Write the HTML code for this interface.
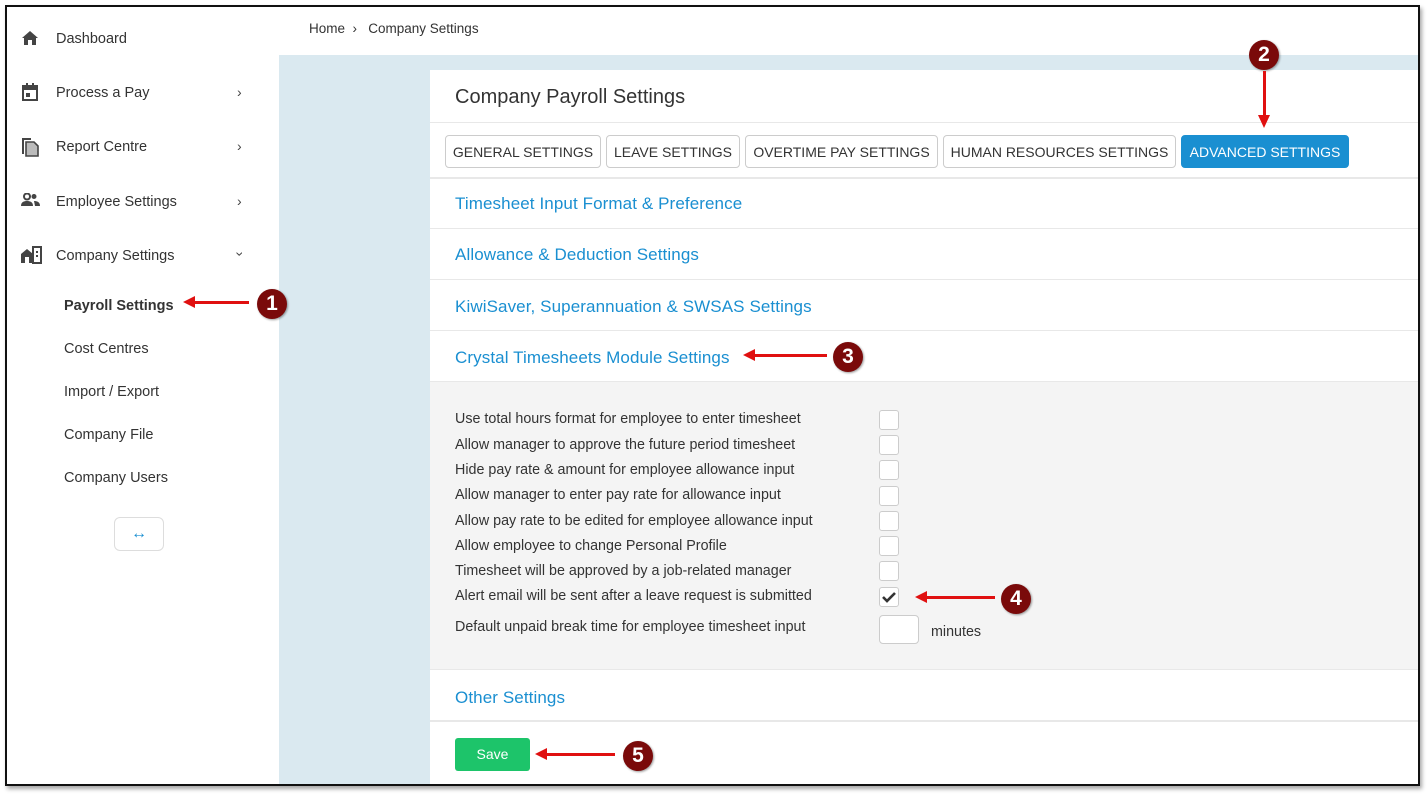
<!DOCTYPE html>
<html><head><style>
*{margin:0;padding:0;box-sizing:border-box}
body{width:1427px;height:795px;background:#fff;font-family:"Liberation Sans",sans-serif;color:#333;position:relative;overflow:hidden}
.frame{position:absolute;left:5px;top:5px;width:1415px;height:781px;border:2px solid #111;box-shadow:2px 3px 4px rgba(0,0,0,.35);overflow:hidden;background:#dae9f0}
.side{position:absolute;left:0;top:0;width:272px;height:100%;background:#fff}
.a{position:absolute;font-size:14.5px;color:#333;white-space:nowrap}
.hdr{position:absolute;left:272px;top:0;right:0;height:48px;background:#fff}
.card{position:absolute;left:423px;top:63px;right:0;bottom:0;background:#fff}
.hr{position:absolute;left:0;right:0;height:2px;background:#e8e8e8}
.tab{position:absolute;top:128px;height:33px;border:1px solid #ccc;border-radius:4px;font-size:14px;line-height:33px;text-align:center;color:#333;background:#fff}
.sec{position:absolute;left:448px;font-size:17px;color:#1a8fd1;letter-spacing:.1px}
.lbl{position:absolute;left:448px;font-size:14.3px;color:#333}
.cb{position:absolute;left:872px;width:20px;height:20px;border:1px solid #ccc;border-radius:3px;background:#fff}
.num{position:absolute;width:30px;height:30px;border-radius:50%;background:#7a0a0a;color:#fff;font-weight:bold;font-size:21px;line-height:30px;text-align:center;box-shadow:1px 1px 2px rgba(0,0,0,.4)}
.ar{position:absolute;height:3px;background:#e01010}
.ar:before{content:"";position:absolute;left:-10px;top:-5px;border-right:12px solid #e01010;border-top:6.5px solid transparent;border-bottom:6.5px solid transparent}
.chev{position:absolute;left:230px;font-size:14px;color:#444}
</style></head><body>
<div class="frame">
<div class="side">
<svg style="position:absolute;left:14px;top:23px" width="18" height="16" viewBox="0 0 18 16"><path d="M9 1L1 8h2v7h4v-5h4v5h4V8h2z" fill="#444"/></svg>
<div class="a" style="left:49px;top:24px">Dashboard</div>
<svg style="position:absolute;left:15px;top:76px" width="16" height="18" viewBox="0 0 16 18"><rect x="1" y="3" width="14" height="14" fill="none" stroke="#444" stroke-width="2"/><rect x="1" y="3" width="14" height="4" fill="#444"/><rect x="4" y="0" width="2" height="4" fill="#444"/><rect x="10" y="0" width="2" height="4" fill="#444"/><rect x="4" y="10" width="4" height="4" fill="#444"/></svg>
<div class="a" style="left:49px;top:78px">Process a Pay</div><div class="chev" style="top:77px">›</div>
<svg style="position:absolute;left:14px;top:130px" width="18" height="20" viewBox="0 0 18 20"><path d="M1 1h9v2H3v14H1z" fill="#444"/><path d="M5 5h8l4 4v10H5z" fill="#bbb" stroke="#444" stroke-width="1.6"/></svg>
<div class="a" style="left:49px;top:132px">Report Centre</div><div class="chev" style="top:131px">›</div>
<svg style="position:absolute;left:14px;top:186px" width="20" height="14" viewBox="0 0 20 14"><circle cx="6" cy="3.5" r="3" fill="none" stroke="#444" stroke-width="2"/><path d="M0 13c0-4 3-5 6-5s6 1 6 5z" fill="#444"/><circle cx="13" cy="3.5" r="2.5" fill="#444"/><path d="M13 8c3 0 6 1 6 5h-5z" fill="#444"/></svg>
<div class="a" style="left:49px;top:187px">Employee Settings</div><div class="chev" style="top:186px">›</div>
<svg style="position:absolute;left:13px;top:239px" width="22" height="18" viewBox="0 0 22 18"><path d="M1 17V8l6-5 6 5v9z" fill="#444"/><rect x="5" y="11" width="4" height="6" fill="#fff"/><rect x="13" y="1" width="8" height="16" fill="none" stroke="#444" stroke-width="2"/><rect x="16" y="5" width="2" height="2" fill="#444"/><rect x="16" y="9" width="2" height="2" fill="#444"/></svg>
<div class="a" style="left:49px;top:241px">Company Settings</div><div class="chev" style="top:239px;transform:rotate(90deg);left:231px">›</div>
<div class="a" style="left:57px;top:291px;font-weight:bold">Payroll Settings</div>
<div class="a" style="left:57px;top:334px">Cost Centres</div>
<div class="a" style="left:57px;top:377px">Import / Export</div>
<div class="a" style="left:57px;top:420px">Company File</div>
<div class="a" style="left:57px;top:463px">Company Users</div>
<div style="position:absolute;left:107px;top:510px;width:50px;height:34px;border:1px solid #ddd;border-radius:6px;color:#1a8fd1;text-align:center;line-height:31px;font-size:16px;font-weight:bold">↔</div>
</div>
<div class="hdr"><div class="a" style="left:30px;top:14px;font-size:13.5px">Home &nbsp;›&nbsp;&nbsp; Company Settings</div></div>
<div class="card">
<div class="a" style="left:25px;top:16px;font-size:20px;color:#333">Company Payroll Settings</div>
<div class="hr" style="top:52px;height:1px"></div>
<div class="hr" style="top:107px"></div>
<div class="hr" style="top:158px;height:1px"></div>
<div class="hr" style="top:209px;height:1px"></div>
<div class="hr" style="top:260px;height:1px"></div>
<div style="position:absolute;left:0;right:0;top:311px;height:289px;background:#f4f4f4;border-top:1px solid #e8e8e8;border-bottom:1px solid #e8e8e8"></div>
<div class="hr" style="top:650px"></div>
</div>
<div class="tab" style="left:438px;width:156px">GENERAL SETTINGS</div>
<div class="tab" style="left:599px;width:134px">LEAVE SETTINGS</div>
<div class="tab" style="left:738px;width:193px">OVERTIME PAY SETTINGS</div>
<div class="tab" style="left:936px;width:233px">HUMAN RESOURCES SETTINGS</div>
<div class="tab" style="left:1174px;width:168px;background:#1a8fd1;border-color:#1a8fd1;color:#fff">ADVANCED SETTINGS</div>
<div class="sec" style="top:187px">Timesheet Input Format &amp; Preference</div>
<div class="sec" style="top:238px">Allowance &amp; Deduction Settings</div>
<div class="sec" style="top:290px">KiwiSaver, Superannuation &amp; SWSAS Settings</div>
<div class="sec" style="top:341px">Crystal Timesheets Module Settings</div>
<div class="lbl" style="top:404px">Use total hours format for employee to enter timesheet</div>
<div class="lbl" style="top:430px">Allow manager to approve the future period timesheet</div>
<div class="lbl" style="top:455px">Hide pay rate &amp; amount for employee allowance input</div>
<div class="lbl" style="top:480px">Allow manager to enter pay rate for allowance input</div>
<div class="lbl" style="top:506px">Allow pay rate to be edited for employee allowance input</div>
<div class="lbl" style="top:531px">Allow employee to change Personal Profile</div>
<div class="lbl" style="top:556px">Timesheet will be approved by a job-related manager</div>
<div class="lbl" style="top:581px">Alert email will be sent after a leave request is submitted</div>
<div class="lbl" style="top:612px">Default unpaid break time for employee timesheet input</div>
<div class="cb" style="top:403px"></div><div class="cb" style="top:428px"></div><div class="cb" style="top:453px"></div><div class="cb" style="top:479px"></div><div class="cb" style="top:504px"></div><div class="cb" style="top:529px"></div><div class="cb" style="top:554px"></div>
<div class="cb" style="top:580px"><svg width="18" height="18" viewBox="0 0 18 18"><path d="M3 9l4 4 8-8" fill="none" stroke="#333" stroke-width="2.6"/></svg></div>
<div class="cb" style="top:608px;width:40px;height:29px;border-radius:4px"></div>
<div class="lbl" style="left:924px;top:617px">minutes</div>
<div class="sec" style="top:681px">Other Settings</div>
<div style="position:absolute;left:448px;top:731px;width:75px;height:33px;background:#1dc46a;border-radius:3px;color:#fff;font-size:14px;text-align:center;line-height:33px">Save</div>
<div class="ar" style="left:186px;top:294px;width:56px"></div><div class="num" style="left:250px;top:282px">1</div>
<div class="num" style="left:1242px;top:33px">2</div>
<div style="position:absolute;left:1256px;top:64px;width:3px;height:46px;background:#e01010"></div>
<div style="position:absolute;left:1251px;top:108px;border-top:13px solid #e01010;border-left:6.5px solid transparent;border-right:6.5px solid transparent"></div>
<div class="ar" style="left:746px;top:347px;width:74px"></div><div class="num" style="left:826px;top:335px">3</div>
<div class="ar" style="left:918px;top:589px;width:70px"></div><div class="num" style="left:994px;top:577px">4</div>
<div class="ar" style="left:538px;top:746px;width:70px"></div><div class="num" style="left:616px;top:734px">5</div>
</div>
</body></html>
